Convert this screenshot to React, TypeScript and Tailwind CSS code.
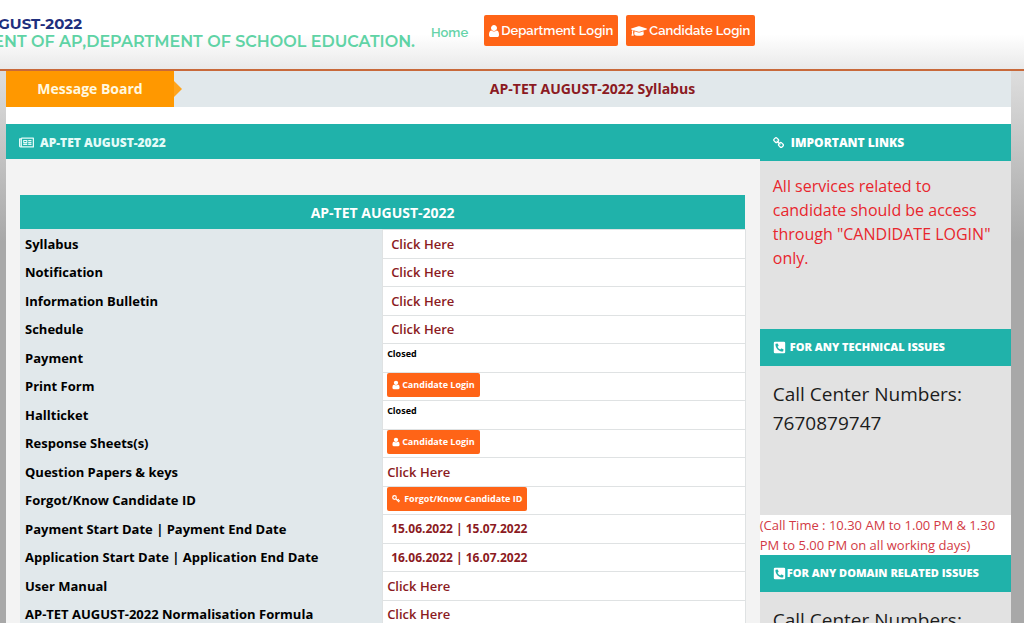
import type { ReactNode } from 'react';
import { FaGraduationCap, FaPhoneSquareAlt, FaRegNewspaper } from 'react-icons/fa';

const UserIcon = ({ className }: { className: string }) => (
  <svg viewBox="0 0 1280 1792" fill="currentColor" aria-hidden="true" className={className}>
    <path d="M1280 1399q0 109-62.5 187t-150.5 78h-854q-88 0-150.5-78t-62.5-187q0-85 8.5-160.5t31.5-152 58.5-131 94-89 134.5-34.5q131 128 313 128t313-128q76 0 134.5 34.5t94 89 58.5 131 31.5 152 8.5 160.5zm-256-887q0 159-112.5 271.5t-271.5 112.5-271.5-112.5-112.5-271.5 112.5-271.5 271.5-112.5 271.5 112.5 112.5 271.5z" />
  </svg>
);

const ChainIcon = ({ className }: { className: string }) => (
  <svg viewBox="0 0 1792 1792" fill="currentColor" aria-hidden="true" className={className}>
    <path d="M1456 1216q0-40-28-68l-208-208q-28-28-68-28-42 0-72 32 3 3 19 18.5t21.5 21.5 15 19 13 25.5 3.5 27.5q0 40-28 68t-68 28q-15 0-27.5-3.5t-25.5-13-19-15-21.5-21.5-18.5-19q-33 31-33 73 0 40 28 68l206 207q27 27 68 27 40 0 68-26l147-146q28-28 28-67zm-703-705q0-40-28-68l-206-207q-28-28-68-28-39 0-68 27l-147 146q-28 28-28 67 0 40 28 68l208 208q27 27 68 27 42 0 72-31-3-3-19-18.5t-21.5-21.5-15-19-13-25.5-3.5-27.5q0-40 28-68t68-28q15 0 27.5 3.5t25.5 13 19 15 21.5 21.5 18.5 19q33-31 33-73zm895 705q0 120-85 203l-147 146q-83 83-203 83-121 0-204-85l-206-207q-83-83-83-203 0-123 88-209l-88-88q-86 88-208 88-120 0-204-84l-208-208q-84-84-84-204t85-203l147-146q83-83 203-83 121 0 204 85l206 207q83 83 83 203 0 123-88 209l88 88q86-88 208-88 120 0 204 84l208 208q84 84 84 204z" />
  </svg>
);

const KeyIcon = ({ className }: { className: string }) => (
  <svg viewBox="0 0 16 16" fill="none" stroke="currentColor" strokeWidth="2.4" aria-hidden="true" className={className}>
    <circle cx="5" cy="5" r="3.6" />
    <path d="M7.6 7.6l6.8 6.8M11 11l2.6-2.6M13 13l2.4-2.4" />
  </svg>
);

const SmallButton = ({ icon, children }: { icon: ReactNode; children: ReactNode }) => (
  <button type="button" className="flex h-6 items-center gap-0.5 rounded-xs bg-[#ff6417] px-[5px] text-[9px] font-bold text-white">
    {icon}
    {children}
  </button>
);

const TextLink = ({ children }: { children: ReactNode }) => (
  <a href="#" className="text-[#8b1a22]">{children}</a>
);

const Dates = ({ children }: { children: ReactNode }) => (
  <span className="text-xs leading-5 font-bold text-[#8b1a22]">{children}</span>
);

const Closed = () => <span className="block h-5 text-[9px] leading-3 font-bold">Closed</span>;

const LoginButton = () => <SmallButton icon={<UserIcon className="h-2.5 w-2" />}>Candidate Login</SmallButton>;

const ROWS: { label: string; value: ReactNode; pad: string }[] = [
  { label: 'Syllabus', value: <TextLink>Click Here</TextLink>, pad: 'pl-2' },
  { label: 'Notification', value: <TextLink>Click Here</TextLink>, pad: 'pl-2' },
  { label: 'Information Bulletin', value: <TextLink>Click Here</TextLink>, pad: 'pl-2' },
  { label: 'Schedule', value: <TextLink>Click Here</TextLink>, pad: 'pl-2' },
  { label: 'Payment', value: <Closed />, pad: 'pl-1' },
  { label: 'Print Form', value: <LoginButton />, pad: 'pl-1 align-top' },
  { label: 'Hallticket', value: <Closed />, pad: 'pl-1' },
  { label: 'Response Sheets(s)', value: <LoginButton />, pad: 'pl-1 align-top' },
  { label: 'Question Papers & keys', value: <TextLink>Click Here</TextLink>, pad: 'pl-1' },
  {
    label: 'Forgot/Know Candidate ID',
    value: <SmallButton icon={<KeyIcon className="mr-0.5 size-2" />}>Forgot/Know Candidate ID</SmallButton>,
    pad: 'pl-1 align-top',
  },
  { label: 'Payment Start Date | Payment End Date', value: <Dates>15.06.2022 | 15.07.2022</Dates>, pad: 'pl-2' },
  { label: 'Application Start Date | Application End Date', value: <Dates>16.06.2022 | 16.07.2022</Dates>, pad: 'pl-2' },
  { label: 'User Manual', value: <TextLink>Click Here</TextLink>, pad: 'pl-1' },
  { label: 'AP-TET AUGUST-2022 Normalisation Formula', value: <TextLink>Click Here</TextLink>, pad: 'pl-1' },
];

const SideHeading = ({ icon, size = 'text-[11px]', children }: { icon: ReactNode; size?: string; children: ReactNode }) => (
  <h2 className={`flex h-[37px] items-center bg-[#20b2aa] px-[13px] font-extrabold text-white ${size}`}>
    {icon}
    {children}
  </h2>
);

const Header = () => (
  <header className="sticky top-0 z-10 flex h-[71px] border-b-2 border-[#c8693a] bg-linear-to-b from-white from-50% to-[#e9e9e9]">
    {/* Long site title, cut off on its left side */}
    <div className="flex w-[415px] shrink-0 flex-col items-end overflow-hidden pt-[15px] font-['Montserrat','Inter',sans-serif] leading-[18px] font-bold whitespace-nowrap">
      <p className="w-full text-[15px] text-[#1f2f7d]">
        <span className="flex w-[82px] justify-end">AP-TET AUGUST-2022</span>
      </p>
      <p className="text-base leading-[18px] font-semibold text-[#5fd3a5]">GOVERNMENT OF AP,DEPARTMENT OF SCHOOL EDUCATION.</p>
    </div>
    <nav className="flex items-start gap-2 pt-[15px] pl-4 font-['Raleway','Lato',sans-serif] text-[13px] font-semibold">
      <a href="#" className="mr-2 flex h-9 items-center text-[#66d3a8]">Home</a>
      <a href="#" className="flex h-[31px] items-center gap-0.5 rounded-xs bg-[#ff6417] px-[5px] text-white">
        <UserIcon className="h-3.5 w-2.5" />
        Department Login
      </a>
      <a href="#" className="flex h-[31px] items-center gap-0.5 rounded-xs bg-[#ff6417] px-[5px] text-white">
        <FaGraduationCap className="size-4" />
        Candidate Login
      </a>
    </nav>
  </header>
);

export default function App() {
  return (
    <div className="min-h-screen bg-linear-to-b from-[#dcdcdc] from-12% to-[#a8a8a8] to-38% font-['Open_Sans',sans-serif] text-black">
      <Header />
      <main className="mr-[13px] ml-1.5 bg-white">
        <div className="flex h-9 bg-[#e1e8eb]">
          <div className="relative flex w-[168px] items-center justify-center bg-[#ff9800] text-sm font-bold text-[#fff8e0]">
            Message Board
            <span className="absolute top-2.5 left-full border-y-8 border-l-8 border-y-transparent border-l-[#ffa41c]" />
          </div>
          <p className="flex flex-1 items-center justify-center text-sm font-bold text-[#8b1a22]">AP-TET AUGUST-2022 Syllabus</p>
        </div>

        <div className="mt-[17px] flex">
          <section className="w-3/4 bg-[#f3f3f3]">
            <h1 className="flex h-[35px] items-center gap-1.5 bg-[#20b2aa] px-[13px] pt-0.5 text-xs font-extrabold text-[#e4fbf8]">
              <FaRegNewspaper className="size-[15px]" />
              AP-TET AUGUST-2022
            </h1>
            <div className="px-3.5 pt-9">
              <table className="w-full table-fixed text-[13px] font-semibold">
                <thead>
                  <tr className="h-[34px] bg-[#20b2aa] text-sm text-white">
                    <th colSpan={2} className="p-0 pt-0.5 font-bold">AP-TET AUGUST-2022</th>
                  </tr>
                </thead>
                <tbody>
                  {ROWS.map((row) => (
                    <tr key={row.label} className="odd:h-[29px] even:h-7">
                      <th scope="row" className="bg-[#e1e8eb] p-0 pl-[5px] text-left leading-5 font-bold">{row.label}</th>
                      <td className={`border border-[#dfe2e3] bg-white py-0 pr-0 leading-5 ${row.pad}`}>{row.value}</td>
                    </tr>
                  ))}
                </tbody>
              </table>
            </div>
          </section>

          <aside className="w-1/4 bg-[#e2e2e2]">
            <SideHeading size="text-xs" icon={<ChainIcon className="mr-1.5 size-3" />}>IMPORTANT LINKS</SideHeading>
            <p className="h-[168px] px-[13px] pt-[13px] text-base leading-6 text-[#e8262d]">
              All services related to candidate should be access through "CANDIDATE LOGIN" only.
            </p>
            <SideHeading icon={<FaPhoneSquareAlt className="mr-1 size-[13px]" />}>FOR ANY TECHNICAL ISSUES</SideHeading>
            <p className="h-[149px] px-[13px] pt-3.5 text-[19px] leading-[29px] text-[#1c1c1c]">
              Call Center Numbers: 7670879747
            </p>
            <p className="bg-white text-[13px] leading-5 text-[#d23a45]">
              (Call Time : 10.30 AM to 1.00 PM &amp; 1.30 PM to 5.00 PM on all working days)
            </p>
            <SideHeading icon={<FaPhoneSquareAlt className="mr-px size-[13px]" />}>FOR ANY DOMAIN RELATED ISSUES</SideHeading>
            <p className="px-[13px] pt-3.5 text-[19px] leading-[29px] text-[#1c1c1c]">Call Center Numbers:</p>
          </aside>
        </div>
      </main>
    </div>
  );
}
